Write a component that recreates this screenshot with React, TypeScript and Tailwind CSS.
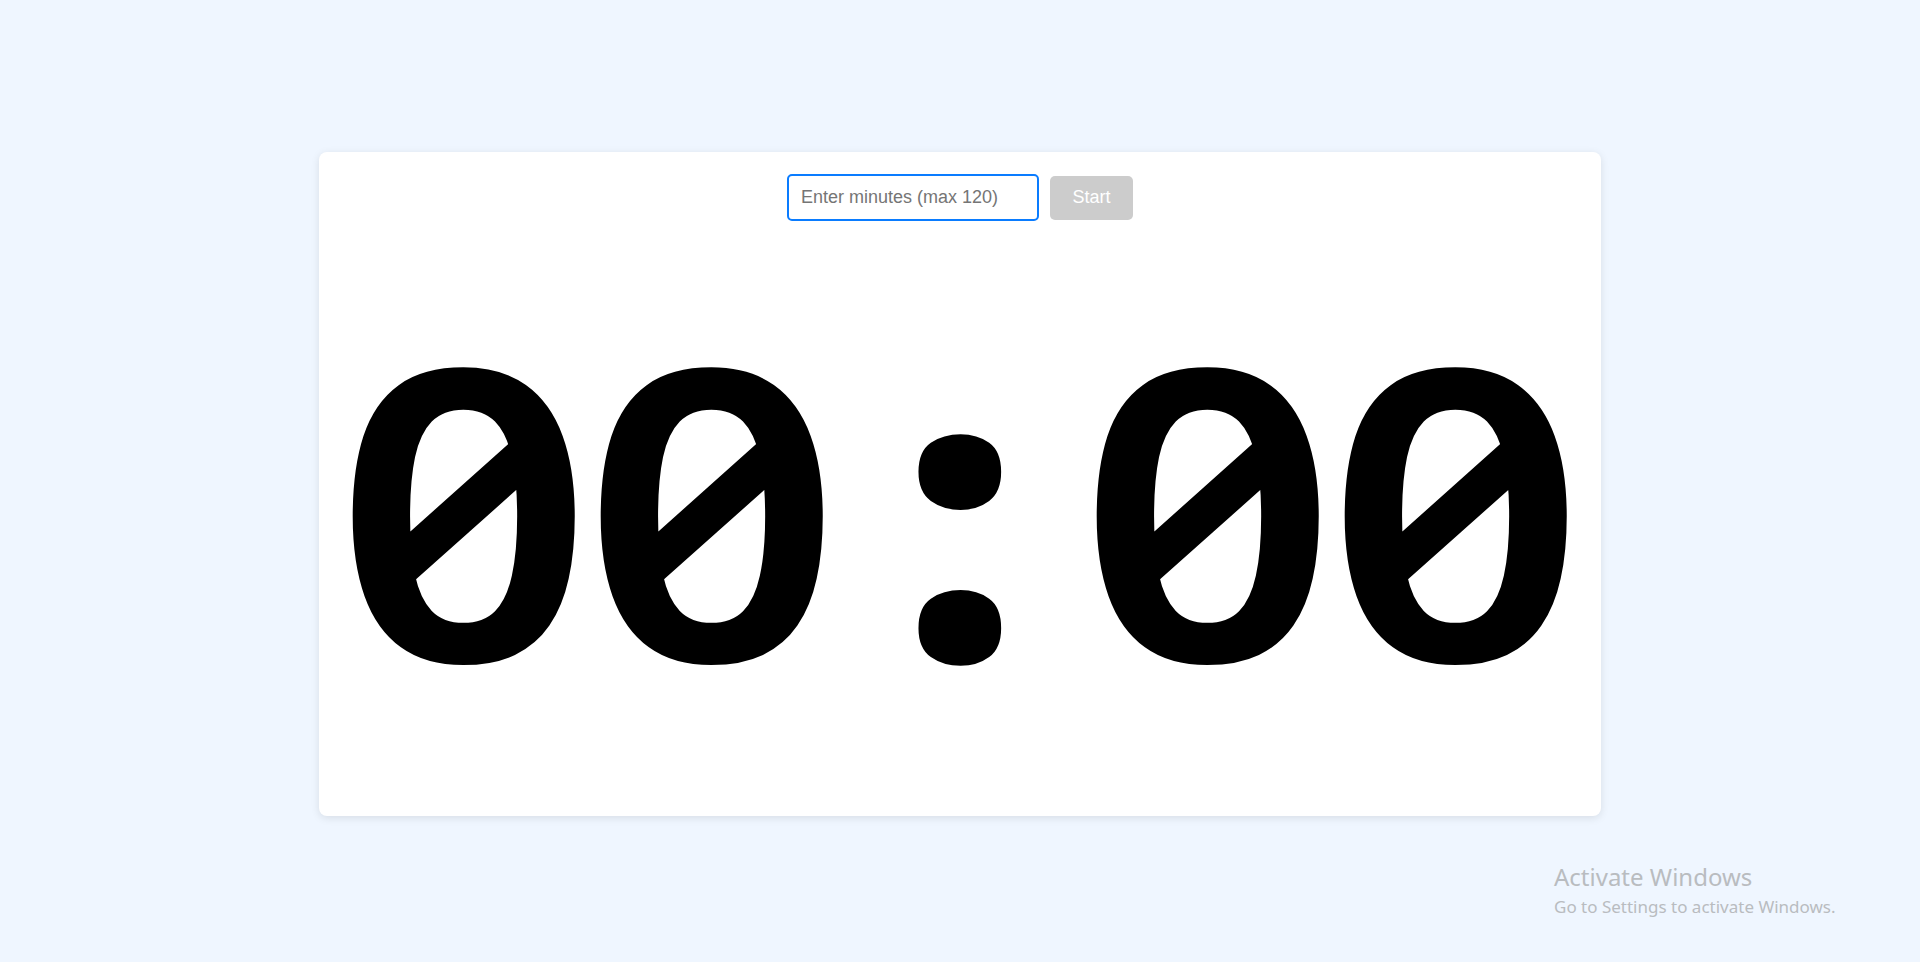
import React, { useState } from 'react';

const Cell: React.FC<{ ch: string }> = ({ ch }) => (
  <span className="inline-block w-[248px] text-center">
    <span className={ch === ":" ? "inline-block font-black" : "inline-block scale-x-[1.12]"}>{ch}</span>
  </span>
);

const App: React.FC = () => {
  const [minutes, setMinutes] = useState("");
  const time = "00:00";

  return (
    <div className="relative min-h-screen w-full bg-[#eff6ff] flex flex-col items-center pt-[152px]">
      <div className="bg-white rounded-lg shadow-[0_2px_8px_rgba(0,0,0,0.1)] px-[21px] pt-[22px] pb-5 flex flex-col items-center">
        <div className="flex items-center gap-[11px]">
          <input
            type="number"
            value={minutes}
            onChange={(e) => setMinutes(e.target.value)}
            placeholder="Enter minutes (max 120)"
            className="w-[252px] h-[47px] rounded-[5px] border-2 border-[#0a7cff] px-3 text-[18px] text-black placeholder:text-[#757575] outline-none font-['Liberation_Sans',Arial,sans-serif]"
          />
          <button
            disabled
            className="w-[83px] h-[44px] rounded-[5px] bg-[#cccccc] text-white text-[18px] font-['Liberation_Sans',Arial,sans-serif]"
          >
            Start
          </button>
        </div>
        <div className="mt-[81px] mb-[89px] flex leading-none text-[405px] font-semibold text-black font-['Noto_Sans',sans-serif] [font-feature-settings:'zero','tnum'] whitespace-nowrap">
          {time.split("").map((c, i) => (
            <Cell key={i} ch={c} />
          ))}
        </div>
      </div>

      <div className="absolute left-[1554px] top-[862px] text-[#b9bcc0] font-['Noto_Sans','Open_Sans',sans-serif] pointer-events-none">
        <div className="text-[24px] leading-[30px]">Activate Windows</div>
        <div className="text-[17px] leading-[27px] pt-[1px]">Go to Settings to activate Windows.</div>
      </div>
    </div>
  );
};

export default App;
